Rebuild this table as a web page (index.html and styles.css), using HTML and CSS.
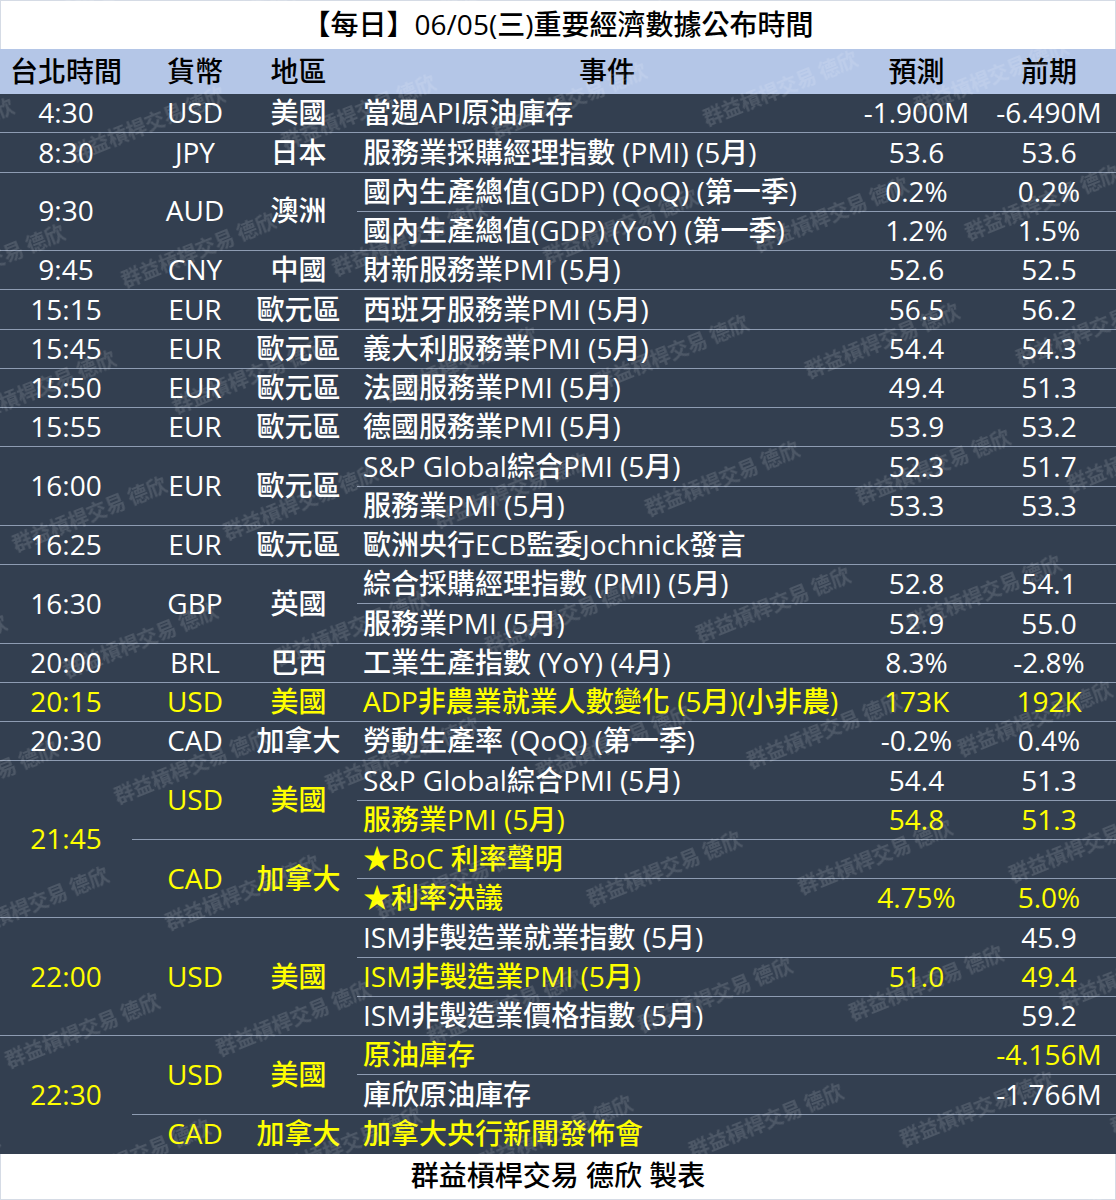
FILE: index.html
```html
<!DOCTYPE html>
<html lang="zh-Hant">
<head>
<meta charset="utf-8">
<title>每日重要經濟數據公布時間</title>
<link rel="stylesheet" href="styles.css">
</head>
<body>
<div class="sheet">
  <div class="title">【每日】06/05(三)重要經濟數據公布時間</div>
  <div class="grid head">
    <div class="h">台北時間</div>
    <div class="h">貨幣</div>
    <div class="h reg">地區</div>
    <div class="h">事件</div>
    <div class="h">預測</div>
    <div class="h pv">前期</div>
  </div>
  <div class="grid body">
    <div class="c">4:30</div><div class="c">USD</div><div class="c reg">美國</div>
    <div class="c ev">當週API原油庫存</div><div class="c">-1.900M</div><div class="c pv">-6.490M</div>

    <div class="c">8:30</div><div class="c">JPY</div><div class="c reg">日本</div>
    <div class="c ev">服務業採購經理指數 (PMI) (5月)</div><div class="c">53.6</div><div class="c pv">53.6</div>

    <div class="c s2">9:30</div><div class="c s2">AUD</div><div class="c reg s2">澳洲</div>
    <div class="c ev">國內生產總值(GDP) (QoQ) (第一季)</div><div class="c">0.2%</div><div class="c pv">0.2%</div>
    <div class="c ev">國內生產總值(GDP) (YoY) (第一季)</div><div class="c">1.2%</div><div class="c pv">1.5%</div>

    <div class="c">9:45</div><div class="c">CNY</div><div class="c reg">中國</div>
    <div class="c ev">財新服務業PMI (5月)</div><div class="c">52.6</div><div class="c pv">52.5</div>

    <div class="c">15:15</div><div class="c">EUR</div><div class="c reg">歐元區</div>
    <div class="c ev">西班牙服務業PMI (5月)</div><div class="c">56.5</div><div class="c pv">56.2</div>

    <div class="c">15:45</div><div class="c">EUR</div><div class="c reg">歐元區</div>
    <div class="c ev">義大利服務業PMI (5月)</div><div class="c">54.4</div><div class="c pv">54.3</div>

    <div class="c">15:50</div><div class="c">EUR</div><div class="c reg">歐元區</div>
    <div class="c ev">法國服務業PMI (5月)</div><div class="c">49.4</div><div class="c pv">51.3</div>

    <div class="c">15:55</div><div class="c">EUR</div><div class="c reg">歐元區</div>
    <div class="c ev">德國服務業PMI (5月)</div><div class="c">53.9</div><div class="c pv">53.2</div>

    <div class="c s2">16:00</div><div class="c s2">EUR</div><div class="c reg s2">歐元區</div>
    <div class="c ev">S&amp;P Global綜合PMI (5月)</div><div class="c">52.3</div><div class="c pv">51.7</div>
    <div class="c ev">服務業PMI (5月)</div><div class="c">53.3</div><div class="c pv">53.3</div>

    <div class="c">16:25</div><div class="c">EUR</div><div class="c reg">歐元區</div>
    <div class="c ev">歐洲央行ECB監委Jochnick發言</div><div class="c"></div><div class="c pv"></div>

    <div class="c s2">16:30</div><div class="c s2">GBP</div><div class="c reg s2">英國</div>
    <div class="c ev">綜合採購經理指數 (PMI) (5月)</div><div class="c">52.8</div><div class="c pv">54.1</div>
    <div class="c ev">服務業PMI (5月)</div><div class="c">52.9</div><div class="c pv">55.0</div>

    <div class="c">20:00</div><div class="c">BRL</div><div class="c reg">巴西</div>
    <div class="c ev">工業生產指數 (YoY) (4月)</div><div class="c">8.3%</div><div class="c pv">-2.8%</div>

    <div class="c y">20:15</div><div class="c y">USD</div><div class="c reg y">美國</div>
    <div class="c ev y">ADP非農業就業人數變化 (5月)(小非農)</div><div class="c y">173K</div><div class="c pv y">192K</div>

    <div class="c">20:30</div><div class="c">CAD</div><div class="c reg">加拿大</div>
    <div class="c ev">勞動生產率 (QoQ) (第一季)</div><div class="c">-0.2%</div><div class="c pv">0.4%</div>

    <div class="c s4 y">21:45</div><div class="c s2 y">USD</div><div class="c reg s2 y">美國</div>
    <div class="c ev">S&amp;P Global綜合PMI (5月)</div><div class="c">54.4</div><div class="c pv">51.3</div>
    <div class="c ev y">服務業PMI (5月)</div><div class="c y">54.8</div><div class="c pv y">51.3</div>
    <div class="c s2 y">CAD</div><div class="c reg s2 y">加拿大</div>
    <div class="c ev y">★BoC 利率聲明</div><div class="c"></div><div class="c pv"></div>
    <div class="c ev y">★利率決議</div><div class="c y">4.75%</div><div class="c pv y">5.0%</div>

    <div class="c s3 y">22:00</div><div class="c s3 y">USD</div><div class="c reg s3 y">美國</div>
    <div class="c ev">ISM非製造業就業指數 (5月)</div><div class="c"></div><div class="c pv">45.9</div>
    <div class="c ev y">ISM非製造業PMI (5月)</div><div class="c y">51.0</div><div class="c pv y">49.4</div>
    <div class="c ev">ISM非製造業價格指數 (5月)</div><div class="c"></div><div class="c pv">59.2</div>

    <div class="c s3 y last">22:30</div><div class="c s2 y">USD</div><div class="c reg s2 y">美國</div>
    <div class="c ev y">原油庫存</div><div class="c"></div><div class="c pv y">-4.156M</div>
    <div class="c ev">庫欣原油庫存</div><div class="c"></div><div class="c pv">-1.766M</div>
    <div class="c y last">CAD</div><div class="c reg y last">加拿大</div>
    <div class="c ev y last">加拿大央行新聞發佈會</div><div class="c last"></div><div class="c pv last"></div>
  </div>
  <div class="footer">群益槓桿交易 德欣 製表</div>

  <svg class="wm" width="1116" height="1200" aria-hidden="true">
    <defs>
      <pattern id="wmp" width="400" height="136" patternUnits="userSpaceOnUse" patternTransform="rotate(-22)">
        <text x="8" y="42">群益槓桿交易 德欣</text>
        <text x="208" y="110">群益槓桿交易 德欣</text>
      </pattern>
    </defs>
    <rect x="0" y="0" width="1116" height="1200" fill="url(#wmp)"></rect>
  </svg>
</div>
</body>
</html>
```

FILE: styles.css
```css
html, body {
  margin: 0;
  padding: 0;
  background: #ffffff;
}

.sheet {
  position: relative;
  width: 1116px;
  height: 1200px;
  overflow: hidden;
  font-family: "Open Sans", "Noto Sans CJK TC", sans-serif;
  font-size: 28px;
  font-weight: 500;
  line-height: 1.2;
}

.title {
  height: 49px;
  display: flex;
  align-items: center;
  justify-content: center;
  color: #000000;
  background: #ffffff;
  box-sizing: border-box;
  border: 1px solid #d5dbe5;
  border-bottom: none;
}

.grid {
  display: grid;
  grid-template-columns: 132px 126px 99px 500px 119px 140px;
}

.head {
  height: 45px;
  background: #b4c6e7;
  color: #000000;
}

.h {
  display: flex;
  align-items: center;
  justify-content: center;
  white-space: nowrap;
}

.body {
  background: #333f50;
  grid-auto-rows: 39.26px;
}

.c {
  display: flex;
  align-items: center;
  justify-content: center;
  box-sizing: border-box;
  border-bottom: 1px solid #8e9cb2;
  color: #ffffff;
  white-space: nowrap;
}

.c.last {
  border-bottom: none;
}

.reg {
  padding-right: 18px;
}

.pv {
  padding-left: 6px;
}

.ev {
  justify-content: flex-start;
  padding-left: 6px;
}

.y {
  color: #ffff00;
}

.s2 { grid-row: span 2; }
.s3 { grid-row: span 3; }
.s4 { grid-row: span 4; }

.footer {
  height: 46px;
  display: flex;
  align-items: center;
  justify-content: center;
  color: #000000;
  background: #ffffff;
  box-sizing: border-box;
  border: 1px solid #d5dbe5;
  border-top: none;
}

.wm {
  position: absolute;
  top: 0;
  left: 0;
  pointer-events: none;
}

.wm text {
  font-family: "Noto Sans CJK TC", sans-serif;
  font-weight: 700;
  font-size: 20px;
  fill: rgba(255, 255, 255, 0.13);
}
```
